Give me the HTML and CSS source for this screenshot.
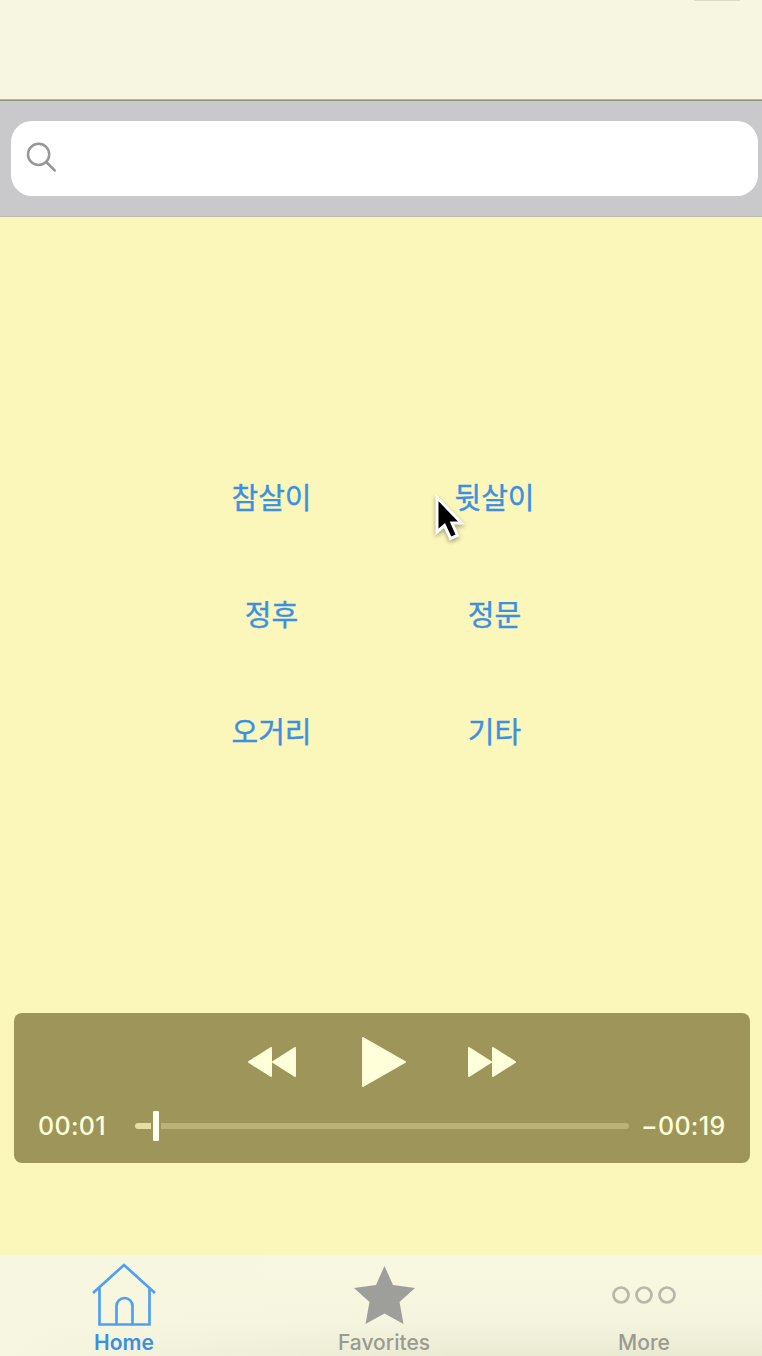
FILE: index.html
```html
<!DOCTYPE html>
<html lang="ko">
<head>
<meta charset="utf-8">
<title>Home</title>
<link rel="stylesheet" href="styles.css">
</head>
<body>
<div class="app">
  <header class="topbar"><span class="topbar-notch"></span></header>
  <div class="searchbar">
    <div class="search-field">
      <svg class="search-icon" viewBox="0 0 32 32"><circle cx="12.6" cy="12.4" r="10.6"/><path d="M20.2 20 L28.800 28.500"/></svg>
    </div>
  </div>
  <main class="content">
    <nav class="places">
      <a>참살이</a><a>뒷살이</a>
      <a>정후</a><a>정문</a>
      <a>오거리</a><a>기타</a>
    </nav>
    <section class="player">
      <div class="controls">
        <svg class="skip" viewBox="0 0 48 30"><path d="M1 15 L23 1 V29 Z M25 15 L47 1 V29 Z"/></svg>
        <svg class="play" viewBox="0 0 44 50"><path d="M1 1 L43 25 L1 49 Z"/></svg>
        <svg class="skip" viewBox="0 0 48 30"><path d="M1 1 L23 15 L1 29 Z M25 1 L47 15 L25 29 Z"/></svg>
      </div>
      <div class="timeline">
        <span class="elapsed">00:01</span>
        <div class="track"><span class="played"></span><span class="thumb"></span><span class="rest"></span></div>
        <span class="remaining">−00:19</span>
      </div>
    </section>
  </main>
  <footer class="tabs">
    <div class="tab active">
      <svg class="tab-icon" viewBox="0 0 64 64"><path d="M1 30 L32 2 L63 30 M7.500 25 V61.500 H57.500 V25 M24.500 61 V43 A8 8 0 0 1 40.500 43 V61"/></svg>
      <span class="tab-home">Home</span>
    </div>
    <div class="tab">
      <svg class="tab-icon" viewBox="0 0 64 64"><path class="star" d="M32.500 3 L41 22 L63 25 L47.500 39 L51.500 61 L32.500 50.500 L13.500 61 L17.500 39 L2 25 L24 22 Z"/></svg>
      <span class="tab-favorites">Favorites</span>
    </div>
    <div class="tab">
      <svg class="tab-icon dots" viewBox="0 0 64 64"><circle cx="9" cy="32" r="7.500"/><circle cx="32" cy="32" r="7.500"/><circle cx="55" cy="32" r="7.500"/></svg>
      <span class="tab-more">More</span>
    </div>
  </footer>
  <svg class="cursor" viewBox="0 0 36 52"><path d="M4 5.500 V40 L11.500 33.500 L17.500 46.500 L24.500 43.500 L19 31 H28.500 Z"/></svg>
</div>
</body>
</html>
```
FILE: styles.css
```css
* { box-sizing: border-box; }
body { margin: 0; }
.app {
  position: relative;
  display: flex;
  flex-direction: column;
  width: 762px;
  height: 1356px;
  overflow: hidden;
  background: #fbf6b9;
  font-family: Inter, "Liberation Sans", sans-serif;
}
.topbar {
  display: flex;
  justify-content: flex-end;
  height: 101px;
  padding-right: 22px;
  background: #f7f6e0;
  border-bottom: 1px solid #8f917f;
  box-shadow: inset 0 -1px #b3b5a0;
}
.topbar-notch { width: 46px; height: 1px; background: #dcdccb; }
.searchbar {
  height: 116px;
  padding: 20px 4px 20px 11px;
  background: #c9c9cb;
  border-bottom: 1px solid #bdbcb0;
}
.search-field {
  display: flex;
  height: 74.5px;
  padding: 21px 15px;
  border-radius: 21px;
  background: #fff;
}
.search-icon { width: 32px; height: 32px; fill: none; stroke: #97979b; stroke-width: 2.5; stroke-linecap: round; }
.content { flex: 1; display: flex; flex-direction: column; }
.places {
  display: grid;
  grid-template-columns: 223px 223px;
  grid-auto-rows: 117px;
  padding: 220px 0 0 160px;
}
.places a {
  display: flex;
  align-items: center;
  justify-content: center;
  color: #3c90e2;
  font: 400 29px "Noto Sans CJK KR", sans-serif;
  -webkit-text-stroke: .4px #3c90e2;
}
.player {
  height: 150px;
  margin: auto 12px 92px 14px;
  padding: 24px 24px 0;
  border-radius: 8px;
  background: #9d955a;
  color: #ffffda;
}
.controls {
  display: grid;
  grid-template-columns: 48px 44px 48px;
  column-gap: 64px;
  align-items: center;
  height: 50px;
  padding-left: 210px;
}
.controls svg { display: block; fill: #ffffda; stroke: #ffffda; stroke-width: 2; stroke-linejoin: round; }
.skip { width: 48px; height: 30px; }
.play { width: 44px; height: 50px; margin-left: 2px; }
.timeline { display: flex; align-items: center; height: 30px; margin-top: 24px; font-size: 25px; font-weight: 500; line-height: 30px; }
.elapsed, .remaining { letter-spacing: .3px; white-space: nowrap; }
.elapsed { width: 97px; }
.track { display: flex; align-items: center; width: 494px; height: 30px; margin-right: 12px; }
.played { width: 16px; height: 6px; border-radius: 3px 0 0 3px; background: #e6dfa3; }
.thumb { width: 6px; height: 30px; margin: 0 2px; border-radius: 1px; background: #fffff0; }
.rest { flex: 1; height: 6px; border-radius: 0 3px 3px 0; background: #bbb276; }
.tabs {
  display: grid;
  grid-template-columns: repeat(3, 260px);
  width: 780px;
  height: 101px;
  margin-left: -6px;
  padding-top: 8px;
  background: linear-gradient(to right, #f7f6e0, transparent 60%), linear-gradient(#f8f7e0 20%, #f5f4de 65%, #eae9d2);
}
.tab { display: flex; flex-direction: column; align-items: center; color: #9a9a91; font-size: 21px; font-weight: 500; }
.tab-icon { width: 64px; height: 64px; fill: none; stroke: #b8b8aa; stroke-width: 2.7; }
.tab span { margin-top: 3px; line-height: 26px; white-space: nowrap; }
.active { color: #3b8fe3; font-weight: 600; }
.active .tab-icon { stroke: #51a0f0; }
.tab-icon .star { fill: #9e9f9b; stroke: none; }
.cursor {
  position: absolute;
  left: 433px;
  top: 492px;
  width: 36px;
  height: 52px;
  fill: #000;
  stroke: #fff;
  stroke-width: 3;
  filter: drop-shadow(0 2px 2px rgba(0, 0, 0, .35));
}
```
